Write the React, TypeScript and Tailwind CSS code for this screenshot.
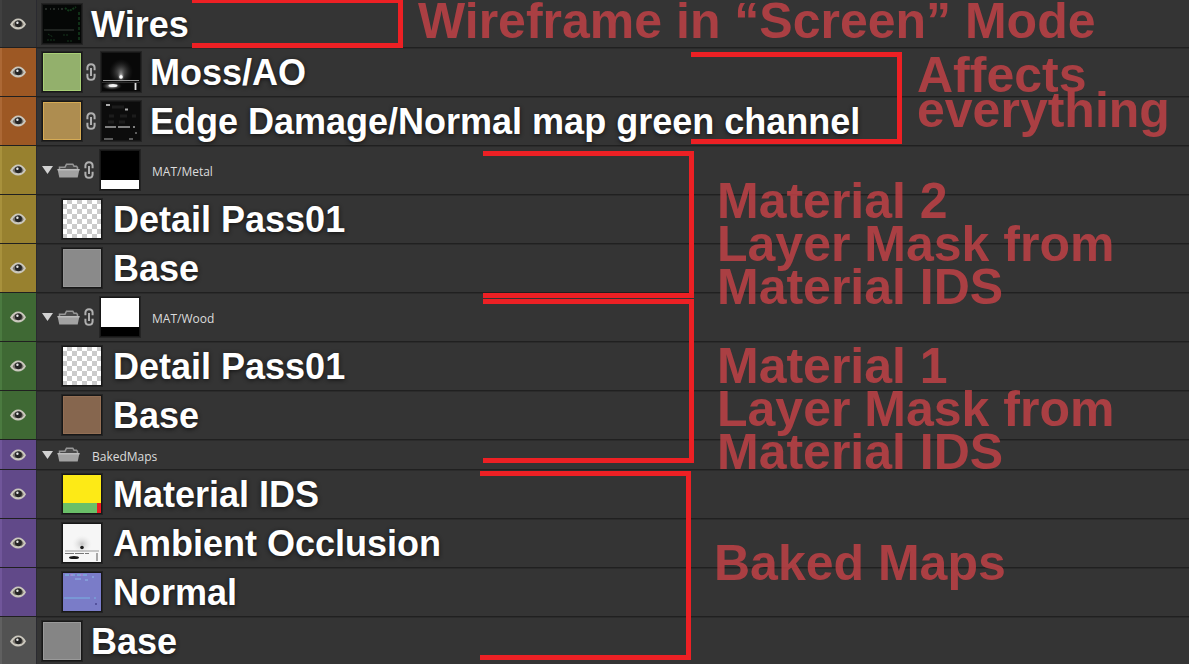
import { useState } from "react";
import type { ReactNode } from "react";
import clsx from "clsx";

type Tone = "none" | "orange" | "yellow" | "green" | "purple" | "gray";

interface Layer {
  id: string;
  name: string;
  tone: Tone;
  height?: string;
  nested?: boolean;
  group?: boolean;
  thumb?: ReactNode;
  mask?: ReactNode;
}

const TONES: Record<Tone, string> = {
  none: "bg-[#383838] border-l-[#404040]",
  orange: "bg-[#9d5824] border-l-[#ac6835]",
  yellow: "bg-[#98812f] border-l-[#a8913c]",
  green: "bg-[#3f6934] border-l-[#4b7a40]",
  purple: "bg-[#614989] border-l-[#70569a]",
  gray: "bg-[#525252] border-l-[#606060]",
};

function EyeIcon() {
  return (
    <svg viewBox="0 0 16 12" className="h-3 w-4">
      <path d="M0 6.500C2.500 2.400 5.200 0.500 8.200 0.500c3.200 0 5.800 2 7.800 5.700C14 10 11.200 11.500 8 11.500 4.800 11.500 2.200 9.800 0 6.500Z" fill="#cbc8be" />
      <path d="M2.600 6.600C3.800 4.300 5 3.200 6.200 2.800L5.800 9.300C4.500 8.900 3.500 8 2.600 6.600ZM13.700 6.300C12.900 4.600 11.900 3.400 10.700 2.900L11 9.200C12.200 8.500 13.100 7.500 13.700 6.300Z" fill="#77726a" />
      <circle cx="8.400" cy="5.800" r="3.500" fill="#242424" />
      <circle cx="7.400" cy="4.700" r="1.200" fill="#e8e8e8" />
    </svg>
  );
}

function LinkIcon() {
  return (
    <svg viewBox="0 0 10 18" className="h-[18px] w-[10px] shrink-0" fill="none" stroke="#b0b0b0" strokeWidth="2">
      <path d="M1.400 7.300V4.800C1.400 2.400 2.800 1.200 5 1.200s3.600 1.200 3.600 3.600v2.500M1.400 10.700v2.500C1.400 15.600 2.800 16.800 5 16.800s3.600-1.200 3.600-3.600v-2.500M5 5v8" />
    </svg>
  );
}

function FolderIcon() {
  return (
    <svg viewBox="0 0 23 15" className="h-[15px] w-[23px] shrink-0">
      <path d="M2.500 6V4.200H8L9.500 1.200h6.300L17 3.200h2.500L20.500 4.500V6" fill="#4a4a4a" stroke="#979797" strokeWidth="1.500" />
      <path d="M0.500 6h22L20.700 14.500H2.300Z" fill="#a2a2a2" />
      <path d="M0.500 6h22v1.500H0.800Z" fill="#bcbcbc" />
    </svg>
  );
}

function Thumb({ children }: { children: ReactNode }) {
  return (
    <svg
      viewBox="0 0 38 38"
      preserveAspectRatio="none"
      className="size-10 shrink-0 border border-[#171717] shadow-[0_0_0_1px_#242424]"
    >
      {children}
    </svg>
  );
}

function Swatch({ fill, edge }: { fill: string; edge: string }) {
  return (
    <Thumb>
      <rect width="38" height="38" fill={edge} />
      <rect x="1" y="1" width="36" height="36" fill={fill} />
    </Thumb>
  );
}

function Checker() {
  const cells = [];
  for (let row = 0; row < 8; row++) {
    for (let col = 0; col < 8; col++) {
      if ((row + col) % 2 === 1) {
        cells.push(<rect key={`${row}-${col}`} x={col * 5 - 1} y={row * 5 - 1} width="5" height="5" fill="#cbcbcb" />);
      }
    }
  }
  return (
    <Thumb>
      <rect width="38" height="38" fill="#fff" />
      {cells}
    </Thumb>
  );
}

function WiresThumb() {
  return (
    <Thumb>
      <rect width="38" height="38" fill="#050706" />
      <path d="M2 4h21" stroke="#8a988c" strokeWidth="1.200" strokeDasharray="2 3 1 2" opacity="0.5" />
      <path d="M22 3l4 3 7-4" stroke="#1f6a2d" strokeWidth="2" strokeDasharray="2 1" fill="none" opacity="0.5" />
      <path d="M36 7v28" stroke="#1c5a29" strokeWidth="2" strokeDasharray="3 2" opacity="0.5" />
      <path d="M1 25h30" stroke="#3a413b" />
      <path d="M5 29l5 3M4 35h8M20 30h5M24 36h6" stroke="#1e4d29" strokeDasharray="2 1" opacity="0.7" />
    </Thumb>
  );
}

function MossMask() {
  return (
    <Thumb>
      <defs>
        <radialGradient id="glow">
          <stop offset="0" stopColor="#fff" />
          <stop offset="0.250" stopColor="#bbb" stopOpacity="0.800" />
          <stop offset="1" stopColor="#444" stopOpacity="0" />
        </radialGradient>
      </defs>
      <rect width="38" height="38" fill="#080808" />
      <ellipse cx="19" cy="19" rx="12" ry="13" fill="url(#glow)" opacity="0.450" />
      <ellipse cx="19" cy="23" rx="4" ry="6" fill="url(#glow)" />
      <circle cx="19" cy="24" r="1.800" fill="#fff" />
      <path d="M1 27.500h36" stroke="#9b9b9b" strokeWidth="1.200" />
      <path d="M0 29.500h38" stroke="#2c2c2c" />
      <ellipse cx="10" cy="33" rx="10" ry="4" fill="url(#glow)" />
      <ellipse cx="11" cy="32.500" rx="4.500" ry="1.500" fill="#f0f0f0" />
      <path d="M33.500 30v7" stroke="#ddd" strokeWidth="1.800" />
    </Thumb>
  );
}

function EdgeMask() {
  return (
    <Thumb>
      <rect width="38" height="38" fill="#0c0c0c" />
      <path d="M4 3h4M23 7.500h3" stroke="#aaa" strokeWidth="2" />
      <path d="M10 5h12M7 14h5M18 14h7M30 14h4M6 20h6M17 20h6" stroke="#1c1c1c" strokeWidth="3" />
      <path d="M3 25h11M16 25h12M31 25h2" stroke="#a5a5a5" strokeWidth="1.300" />
      <path d="M33 31h2M2 37h9M27 37h4" stroke="#777" strokeWidth="1.500" />
    </Thumb>
  );
}

function SplitMask({ top, bottom }: { top: string; bottom: string }) {
  return (
    <Thumb>
      <rect width="38" height="38" fill={top} />
      <rect y="29" width="38" height="9" fill={bottom} />
    </Thumb>
  );
}

function MaterialIdsThumb() {
  return (
    <Thumb>
      <rect width="38" height="38" fill="#fdea16" />
      <rect y="28" width="34" height="10" fill="#6abf68" />
      <rect x="34" y="28" width="4" height="10" fill="#ec1c24" />
    </Thumb>
  );
}

function OcclusionThumb() {
  return (
    <Thumb>
      <defs>
        <radialGradient id="shade">
          <stop offset="0" stopColor="#777" />
          <stop offset="1" stopColor="#ddd" stopOpacity="0" />
        </radialGradient>
      </defs>
      <rect width="38" height="38" fill="#f6f6f6" />
      <ellipse cx="19" cy="20" rx="10" ry="9" fill="url(#shade)" opacity="0.400" />
      <circle cx="19" cy="23.500" r="1.800" fill="#1d1d1d" />
      <path d="M2 27h34" stroke="#999" />
      <path d="M2 29.500h24" stroke="#777" strokeDasharray="9 1" />
      <ellipse cx="11" cy="33.500" rx="5" ry="1.600" fill="#181818" />
      <path d="M34 29v8" stroke="#8b8b8b" strokeWidth="1.500" />
    </Thumb>
  );
}

function NormalThumb() {
  return (
    <Thumb>
      <rect width="38" height="38" fill="#7a7cc8" />
      <path d="M2 2h22" stroke="#7bc4e5" strokeDasharray="4 2" />
      <path d="M7 2h3M17 2h3" stroke="#b784d5" />
      <path d="M12 6h6M22 7h3M29 4h2" stroke="#8fb9ea" />
      <path d="M1 25h26M31 25h2" stroke="#79b3e2" />
      <path d="M32 31h2" stroke="#54529e" strokeWidth="2" />
    </Thumb>
  );
}

const LAYERS: Layer[] = [
  { id: "wires", name: "Wires", tone: "none", height: "h-12", thumb: <WiresThumb /> },
  { id: "moss", name: "Moss/AO", tone: "orange", thumb: <Swatch fill="#93b06c" edge="#a9d077" />, mask: <MossMask /> },
  { id: "edge", name: "Edge Damage/Normal map green channel", tone: "orange", thumb: <Swatch fill="#ae8d50" edge="#d6ab55" />, mask: <EdgeMask /> },
  { id: "metal", name: "MAT/Metal", tone: "yellow", group: true, mask: <SplitMask top="#000" bottom="#fff" /> },
  { id: "metal-detail", name: "Detail Pass01", tone: "yellow", nested: true, thumb: <Checker /> },
  { id: "metal-base", name: "Base", tone: "yellow", nested: true, thumb: <Swatch fill="#8a8a8a" edge="#959595" /> },
  { id: "wood", name: "MAT/Wood", tone: "green", group: true, mask: <SplitMask top="#fff" bottom="#000" /> },
  { id: "wood-detail", name: "Detail Pass01", tone: "green", nested: true, thumb: <Checker /> },
  { id: "wood-base", name: "Base", tone: "green", nested: true, thumb: <Swatch fill="#86664e" edge="#936f55" /> },
  { id: "baked", name: "BakedMaps", tone: "purple", height: "h-[30px]", group: true },
  { id: "ids", name: "Material IDS", tone: "purple", nested: true, thumb: <MaterialIdsThumb /> },
  { id: "ao", name: "Ambient Occlusion", tone: "purple", nested: true, thumb: <OcclusionThumb /> },
  { id: "normal", name: "Normal", tone: "purple", nested: true, thumb: <NormalThumb /> },
  { id: "root-base", name: "Base", tone: "gray", height: "h-[47px]", thumb: <Swatch fill="#858585" edge="#999" /> },
];

const BRACKETS = [
  "left-[192px] top-0 h-12 border-t-[3px]",
  "left-[691px] top-[52px] h-[92px] border-t-[5px]",
  "left-[483px] top-[151px] h-[147px] border-t-[5px]",
  "left-[483px] top-[299px] h-[164px] border-t-[5px]",
  "left-[480px] top-[471px] h-[189px] border-t-[5px]",
];

const NOTES = [
  { place: "left-[418px] top-0 leading-[43px]", lines: ["Wireframe in “Screen” Mode"] },
  { place: "left-[917px] top-[58px] leading-[35px]", lines: ["Affects", "everything"] },
  { place: "left-[717px] top-[180px] leading-[43px]", lines: ["Material 2", "Layer Mask from", "Material IDS"] },
  { place: "left-[717px] top-[345px] leading-[43px]", lines: ["Material 1", "Layer Mask from", "Material IDS"] },
  { place: "left-[714px] top-[542px] leading-[43px]", lines: ["Baked Maps"] },
];

function LayerRow({ layer }: { layer: Layer }) {
  const [visible, setVisible] = useState(true);

  return (
    <li
      className={clsx(
        "flex border-b border-[#202020] shadow-[0_1px_0_#2b2b2b] last:border-b-0",
        layer.height ?? "h-[49px]",
      )}
    >
      <button
        type="button"
        aria-label={`Toggle ${layer.name}`}
        aria-pressed={visible}
        onClick={() => setVisible(!visible)}
        className={clsx(
          "flex w-[37px] shrink-0 items-center justify-center border-l-2 border-r border-r-[#2a2a30] pr-0.5",
          TONES[layer.tone],
        )}
      >
        {visible && <EyeIcon />}
      </button>

      <div className={clsx("flex min-w-0 items-center", layer.nested ? "pl-[25px]" : "pl-[5px]")}>
        {layer.group && (
          <div className="mr-1 flex items-center gap-1">
            <button type="button" aria-label={`Collapse ${layer.name}`}>
              <svg viewBox="0 0 11 8" className="h-2 w-[11px]">
                <path d="M0 0h11L5.500 8Z" fill="#d2d2d2" />
              </svg>
            </button>
            <FolderIcon />
          </div>
        )}
        {layer.thumb}
        {layer.mask && (
          <div className={clsx("flex items-center", layer.group ? "gap-1.5" : "ml-1 gap-[5px]")}>
            <LinkIcon />
            {layer.mask}
          </div>
        )}
        <span
          className={clsx(
            "whitespace-nowrap",
            layer.group
              ? "pt-1 font-['Open_Sans',sans-serif] text-xs font-medium text-[#dcdcdc]"
              : "pt-0.5 text-4xl font-bold text-white [text-shadow:0_1px_4px_#111]",
            layer.group && (layer.mask ? "ml-3" : "ml-2"),
            !layer.group && (layer.nested ? "ml-[11px]" : "ml-[9px]"),
          )}
        >
          {layer.name}
        </span>
      </div>
    </li>
  );
}

export default function App() {
  return (
    <main className="relative min-h-screen overflow-hidden bg-[#343434] font-['Liberation_Sans',Arial,sans-serif]">
      <ul>
        {LAYERS.map((layer) => (
          <LayerRow key={layer.id} layer={layer} />
        ))}
      </ul>

      {/* Notes drawn over the layer list */}
      <div className="pointer-events-none absolute inset-0">
        {BRACKETS.map((place) => (
          <div key={place} className={clsx("absolute w-[211px] border-r-[5px] border-b-[5px] border-[#ed2024]", place)} />
        ))}
        {NOTES.map((note) => (
          <p
            key={note.place}
            className={clsx("absolute text-[50px] font-bold whitespace-nowrap text-[#c84247] opacity-80", note.place)}
          >
            {note.lines.map((line) => (
              <span key={line} className="block">
                {line}
              </span>
            ))}
          </p>
        ))}
      </div>
    </main>
  );
}
